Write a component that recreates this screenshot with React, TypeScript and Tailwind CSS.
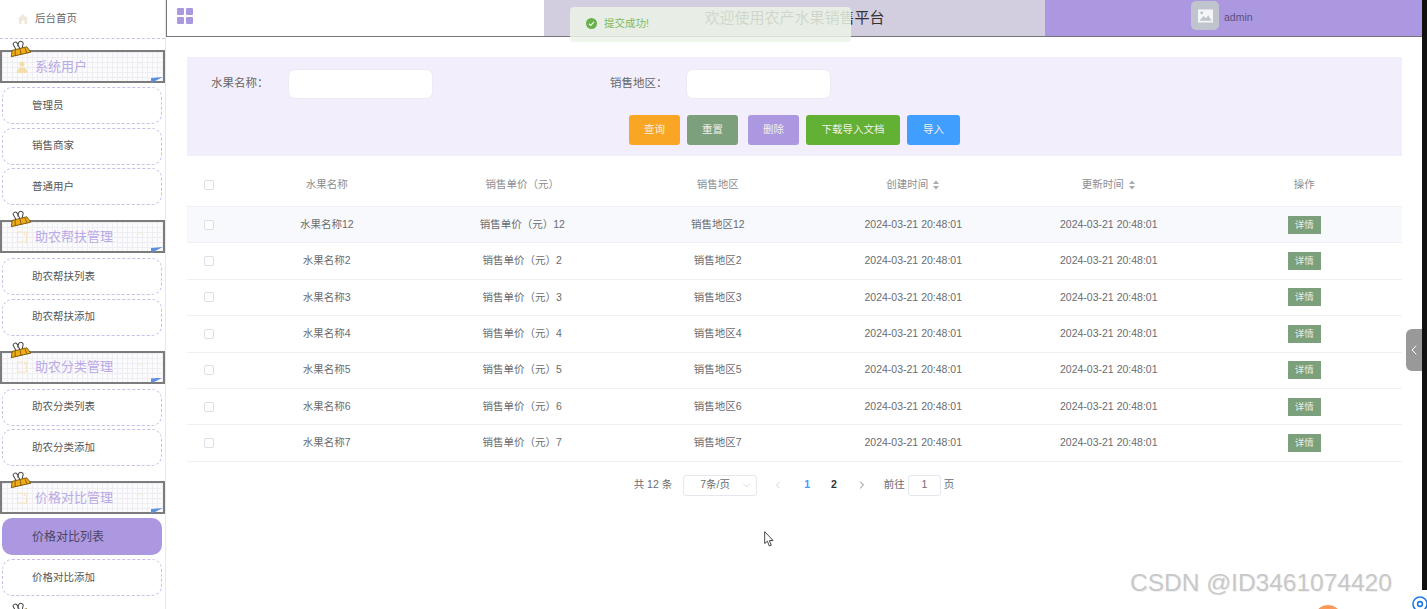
import React from 'react';
import { ChevronDown, ChevronLeft, ChevronRight, ChevronUp } from 'lucide-react';

const FONT = "font-['Liberation_Sans','Noto_Sans_CJK_SC',sans-serif]";

const rows = [
    { name: '水果名称12', price: '销售单价（元）12', area: '销售地区12' },
    { name: '水果名称2', price: '销售单价（元）2', area: '销售地区2' },
    { name: '水果名称3', price: '销售单价（元）3', area: '销售地区3' },
    { name: '水果名称4', price: '销售单价（元）4', area: '销售地区4' },
    { name: '水果名称5', price: '销售单价（元）5', area: '销售地区5' },
    { name: '水果名称6', price: '销售单价（元）6', area: '销售地区6' },
    { name: '水果名称7', price: '销售单价（元）7', area: '销售地区7' },
];

const Clip = () => (
    <svg viewBox="0 0 22 17" className="absolute left-[7px] top-[-12px] h-[17px] w-[22px] -rotate-[10deg]">
        <path d="M7 9 L5 3.5 C4.6 1.5 8 0.5 9 2.5 L11 9 M13 9 L15 4 C15.6 1.8 12 0.6 10.6 2.6 L9 6" fill="none" stroke="#444" strokeWidth="1" />
        <path d="M3 9 L18 8 L21 14 L1 15 Z" fill="#f0ac16" stroke="#6b4a08" strokeWidth="0.8" />
        <path d="M6 9 L5 15 M11 9 L11 15 M16 9 L17 14" stroke="#6b4a08" strokeWidth="0.7" />
    </svg>
);

const GroupHeader = ({ title, user }: { title: string; user?: boolean }) => (
    <div className="relative h-[33px] w-[165px] border-2 border-[#7c7c7c] bg-[#fbfbfd] bg-[linear-gradient(#eeeef2_1px,transparent_1px),linear-gradient(90deg,#eeeef2_1px,transparent_1px)] bg-[size:5px_5px]">
        <Clip />
        <div className="flex h-full items-center pl-[14px]">
            {user ? (
                <svg viewBox="0 0 12 12" className="h-[12px] w-[12px]">
                    <circle cx="6" cy="3" r="2.6" fill="#f5deaa" />
                    <path d="M0.8 12 C0.8 7.6 3 6.4 6 6.4 C9 6.4 11.2 7.6 11.2 12 Z" fill="#f5deaa" />
                </svg>
            ) : (
                <svg viewBox="0 0 12 12" className="h-[12px] w-[12px]" fill="none" stroke="#f5e3bb" strokeWidth="1">
                    <path d="M7 1 H1.5 V11 H10.5 V4.5" />
                    <circle cx="9.5" cy="2.2" r="1.4" />
                </svg>
            )}
            <span className="ml-[7px] text-[13px] text-[#b9a9e6]">{title}</span>
        </div>
        <ChevronUp size={11} strokeWidth={1.5} className="absolute right-[17px] top-[6px] text-[#f5e3bb]" />
        <div className="absolute bottom-[-2px] right-0 h-[6px] w-[12px] bg-[#5d8fde] [clip-path:polygon(0_100%,0_15%,100%_0)]" />
    </div>
);

const NavItem = ({ label, active }: { label: string; active?: boolean }) => (
    <div
        className={
            active
                ? 'ml-[2px] flex h-[37px] w-[160px] items-center rounded-[10px] bg-[#ab98e0] pl-[30px] text-[12px] text-[#4d4560]'
                : 'ml-[2px] flex h-[37px] w-[160px] items-center rounded-[10px] border border-dashed border-[#c9bdea] pl-[29px] text-[10.5px] text-[#555]'
        }
    >
        {label}
    </div>
);

const Sidebar = () => (
    <aside className="h-[609px] w-[166px] shrink-0 overflow-hidden border-r border-[#e8e8ee] bg-white">
        <div className="flex h-[39px] items-center border-b border-dashed border-[#c9bdea] pl-[17px]">
            <svg viewBox="0 0 12 12" className="h-[12px] w-[12px]">
                <path d="M6 1 L11.5 6 H10 V11 H7.4 V7.6 H4.6 V11 H2 V6 H0.5 Z" fill="#f1e8dc" />
            </svg>
            <span className="ml-[6px] text-[10.5px] text-[#666]">后台首页</span>
        </div>
        <div className="mt-[11px]">
            <GroupHeader title="系统用户" user />
            <div className="mt-[4px] flex flex-col gap-[3.5px]">
                <NavItem label="管理员" />
                <NavItem label="销售商家" />
                <NavItem label="普通用户" />
            </div>
        </div>
        <div className="mt-[15px]">
            <GroupHeader title="助农帮扶管理" />
            <div className="mt-[5px] flex flex-col gap-[3.5px]">
                <NavItem label="助农帮扶列表" />
                <NavItem label="助农帮扶添加" />
            </div>
        </div>
        <div className="mt-[15px]">
            <GroupHeader title="助农分类管理" />
            <div className="mt-[5px] flex flex-col gap-[3.5px]">
                <NavItem label="助农分类列表" />
                <NavItem label="助农分类添加" />
            </div>
        </div>
        <div className="mt-[15px]">
            <GroupHeader title="价格对比管理" />
            <div className="mt-[4px] flex flex-col gap-[4px]">
                <NavItem label="价格对比列表" active />
                <NavItem label="价格对比添加" />
            </div>
        </div>
        <div className="mt-[16px]">
            <GroupHeader title="系统管理" />
        </div>
    </aside>
);

const TopBar = () => (
    <header className="flex h-[37px] border-b border-l border-[#77757c]">
        <div className="flex w-[377px] items-center bg-white pl-[10px]">
            <div className="grid grid-cols-2 gap-[1.5px] pb-[4px]">
                <span className="h-[7px] w-[7px] rounded-[1px] bg-[#ab98e0]" />
                <span className="h-[7px] w-[7px] rounded-[1px] bg-[#ab98e0]" />
                <span className="h-[7px] w-[7px] rounded-[1px] bg-[#ab98e0]" />
                <span className="h-[7px] w-[7px] rounded-[1px] bg-[#ab98e0]" />
            </div>
        </div>
        <div className="flex w-[501px] items-center justify-center bg-[#d3cde0] text-[15px] text-[#333]">
            欢迎使用农产水果销售平台
        </div>
        <div className="flex flex-1 items-start bg-[#ab98e0] pl-[146px] pt-[1px]">
            <div className="flex h-[29px] w-[28px] items-center justify-center rounded-[5px] bg-[#c0c4cc]">
                <svg viewBox="0 0 16 14" className="h-[14px] w-[15px]">
                    <path d="M0 0 H16 V14 H0 Z" fill="#f4f5f7" />
                    <circle cx="4" cy="3.6" r="1.6" fill="#c0c4cc" />
                    <path d="M1.5 12 L6 7 L8.5 9.5 L11 6.5 L14.5 12 Z" fill="#c0c4cc" />
                </svg>
            </div>
            <span className="ml-[5px] mt-[9px] text-[10.5px] text-[#5b5080]">admin</span>
        </div>
    </header>
);

const Input = ({ className }: { className: string }) => (
    <div className={`h-[30px] rounded-[7px] border border-[#eceaf3] bg-white ${className}`} />
);

const Button = ({ label, className }: { label: string; className: string }) => (
    <button className={`flex h-[30px] items-center justify-center rounded-[3px] text-[10.5px] text-[#f3efe6] ${className}`}>
        {label}
    </button>
);

const SearchPanel = () => (
    <section className="ml-[21px] mt-[20px] h-[99px] w-[1215px] bg-[#f3eefb] pt-[12px]">
        <div className="flex items-center text-[11.5px] text-[#666]">
            <span className="ml-[24px] w-[77px]">水果名称：</span>
            <Input className="w-[145px]" />
            <span className="ml-[177px] w-[76px]">销售地区：</span>
            <Input className="w-[145px]" />
        </div>
        <div className="mt-[16px] flex justify-center">
            <Button label="查询" className="w-[51px] bg-[#f8a623]" />
            <Button label="重置" className="ml-[7px] w-[51px] bg-[#7ca07c]" />
            <Button label="删除" className="ml-[10px] w-[51px] bg-[#ab98e0]" />
            <Button label="下载导入文档" className="ml-[7px] w-[94px] bg-[#62b034]" />
            <Button label="导入" className="ml-[7px] w-[53px] bg-[#409eff]" />
        </div>
    </section>
);

const Checkbox = () => <span className="block h-[10px] w-[10px] rounded-[2px] border border-[#dcdfe6] bg-white" />;

const SortIcon = () => (
    <svg viewBox="0 0 8 10" className="ml-[4px] h-[10px] w-[8px]" fill="#a8abb2">
        <path d="M4 0.5 L7 4 H1 Z" />
        <path d="M4 9.5 L7 6 H1 Z" />
    </svg>
);

const COLS = 'grid grid-cols-[42px_repeat(6,195.5px)] items-center text-center';

const DataTable = () => (
    <section className="ml-[21px] mt-[7px] w-[1215px] text-[10.5px]">
        <div className={`${COLS} h-[44px] border-b border-[#eef0f6] text-[#8c8e93]`}>
            <div className="flex justify-center pl-[1px]"><Checkbox /></div>
            <div>水果名称</div>
            <div>销售单价（元）</div>
            <div>销售地区</div>
            <div className="flex items-center justify-center">创建时间<SortIcon /></div>
            <div className="flex items-center justify-center">更新时间<SortIcon /></div>
            <div>操作</div>
        </div>
        {rows.map((row, i) => (
            <div key={row.name} className={`${COLS} h-[36.4px] border-b border-[#eef0f6] text-[#6a6c70] ${i === 0 ? 'bg-[#f8f9fc]' : 'bg-white'}`}>
                <div className="flex justify-center pl-[1px]"><Checkbox /></div>
                <div>{row.name}</div>
                <div>{row.price}</div>
                <div>{row.area}</div>
                <div>2024-03-21 20:48:01</div>
                <div>2024-03-21 20:48:01</div>
                <div className="flex justify-center">
                    <span className="flex h-[18px] w-[33px] items-center justify-center bg-[#7ca07c] text-[9.5px] text-[#e8efe6]">详情</span>
                </div>
            </div>
        ))}
    </section>
);

const Pagination = () => (
    <div className="ml-[21px] mt-[13px] flex h-[21px] w-[1215px] items-center justify-center pr-[1px] text-[10.5px] text-[#6a6c70]">
        <span>共 12 条</span>
        <div className="ml-[11px] flex h-[21px] w-[74px] items-center rounded-[3px] border border-[#e4e7ed] pl-[16px] pr-[4px]">
            <span className="flex-1">7条/页</span>
            <ChevronDown size={11} strokeWidth={1.5} className="text-[#c0c4cc]" />
        </div>
        <ChevronLeft size={12} strokeWidth={1.5} className="ml-[15px] text-[#c0c4cc]" />
        <span className="ml-[20px] font-bold text-[#409eff]">1</span>
        <span className="ml-[21px] font-bold text-[#333]">2</span>
        <ChevronRight size={12} strokeWidth={1.5} className="ml-[19px] text-[#555]" />
        <span className="ml-[16px]">前往</span>
        <div className="ml-[3px] flex h-[21px] w-[33px] items-center justify-center rounded-[3px] border border-[#e4e7ed]">1</div>
        <span className="ml-[3px]">页</span>
    </div>
);

const Overlays = () => (
    <>
        <div className="absolute left-[570px] top-[7px] flex h-[35px] w-[281px] items-center rounded-[4px] bg-[#ebf3e6]/85 pb-[2px] pl-[16px]">
            <svg viewBox="0 0 12 12" className="h-[11px] w-[11px]">
                <circle cx="6" cy="6" r="6" fill="#67b04a" />
                <path d="M3.2 6.2 L5.2 8 L8.8 4.2" fill="none" stroke="#eef5ea" strokeWidth="1.3" />
            </svg>
            <span className="ml-[7px] text-[10.5px] text-[#7dbb61]">提交成功!</span>
        </div>
        <div className="absolute left-[1406px] top-[329px] flex h-[42px] w-[16px] items-center justify-end rounded-l-[6px] bg-[#999]">
            <ChevronLeft size={16} strokeWidth={1.5} className="text-white" />
        </div>
        <div className="absolute right-0 top-0 h-[590px] w-[5px] bg-[#111]" />
        <div className="absolute left-[1130px] top-[569px] whitespace-nowrap text-[24.5px] leading-[28px] text-[#c8c8c8] [text-shadow:1px_1px_1px_#eee]">
            CSDN @ID3461074420
        </div>
        <div className="absolute left-[1314px] top-[605px] h-[28px] w-[28px] rounded-full bg-[#fb9a5b]" />
        <svg viewBox="0 0 16 16" className="absolute left-[1412px] top-[596px] h-[16px] w-[16px]" fill="none" stroke="#1e78e6" strokeWidth="1.6">
            <circle cx="8" cy="8" r="7" />
            <circle cx="8" cy="8" r="2.4" />
        </svg>
        <svg viewBox="0 0 10 16" className="absolute left-[764px] top-[531px] h-[16px] w-[10px]">
            <path d="M0.7 0.7 V12.6 L3.4 10.2 L5.3 15 L7.3 14.2 L5.4 9.6 L9 9.4 Z" fill="#fff" stroke="#333" strokeWidth="0.9" />
        </svg>
    </>
);

export default function App() {
    return (
        <div className={`relative flex h-[609px] w-[1427px] overflow-hidden bg-white ${FONT}`}>
            <Sidebar />
            <main className="flex-1">
                <TopBar />
                <SearchPanel />
                <DataTable />
                <Pagination />
            </main>
            <Overlays />
        </div>
    );
}
